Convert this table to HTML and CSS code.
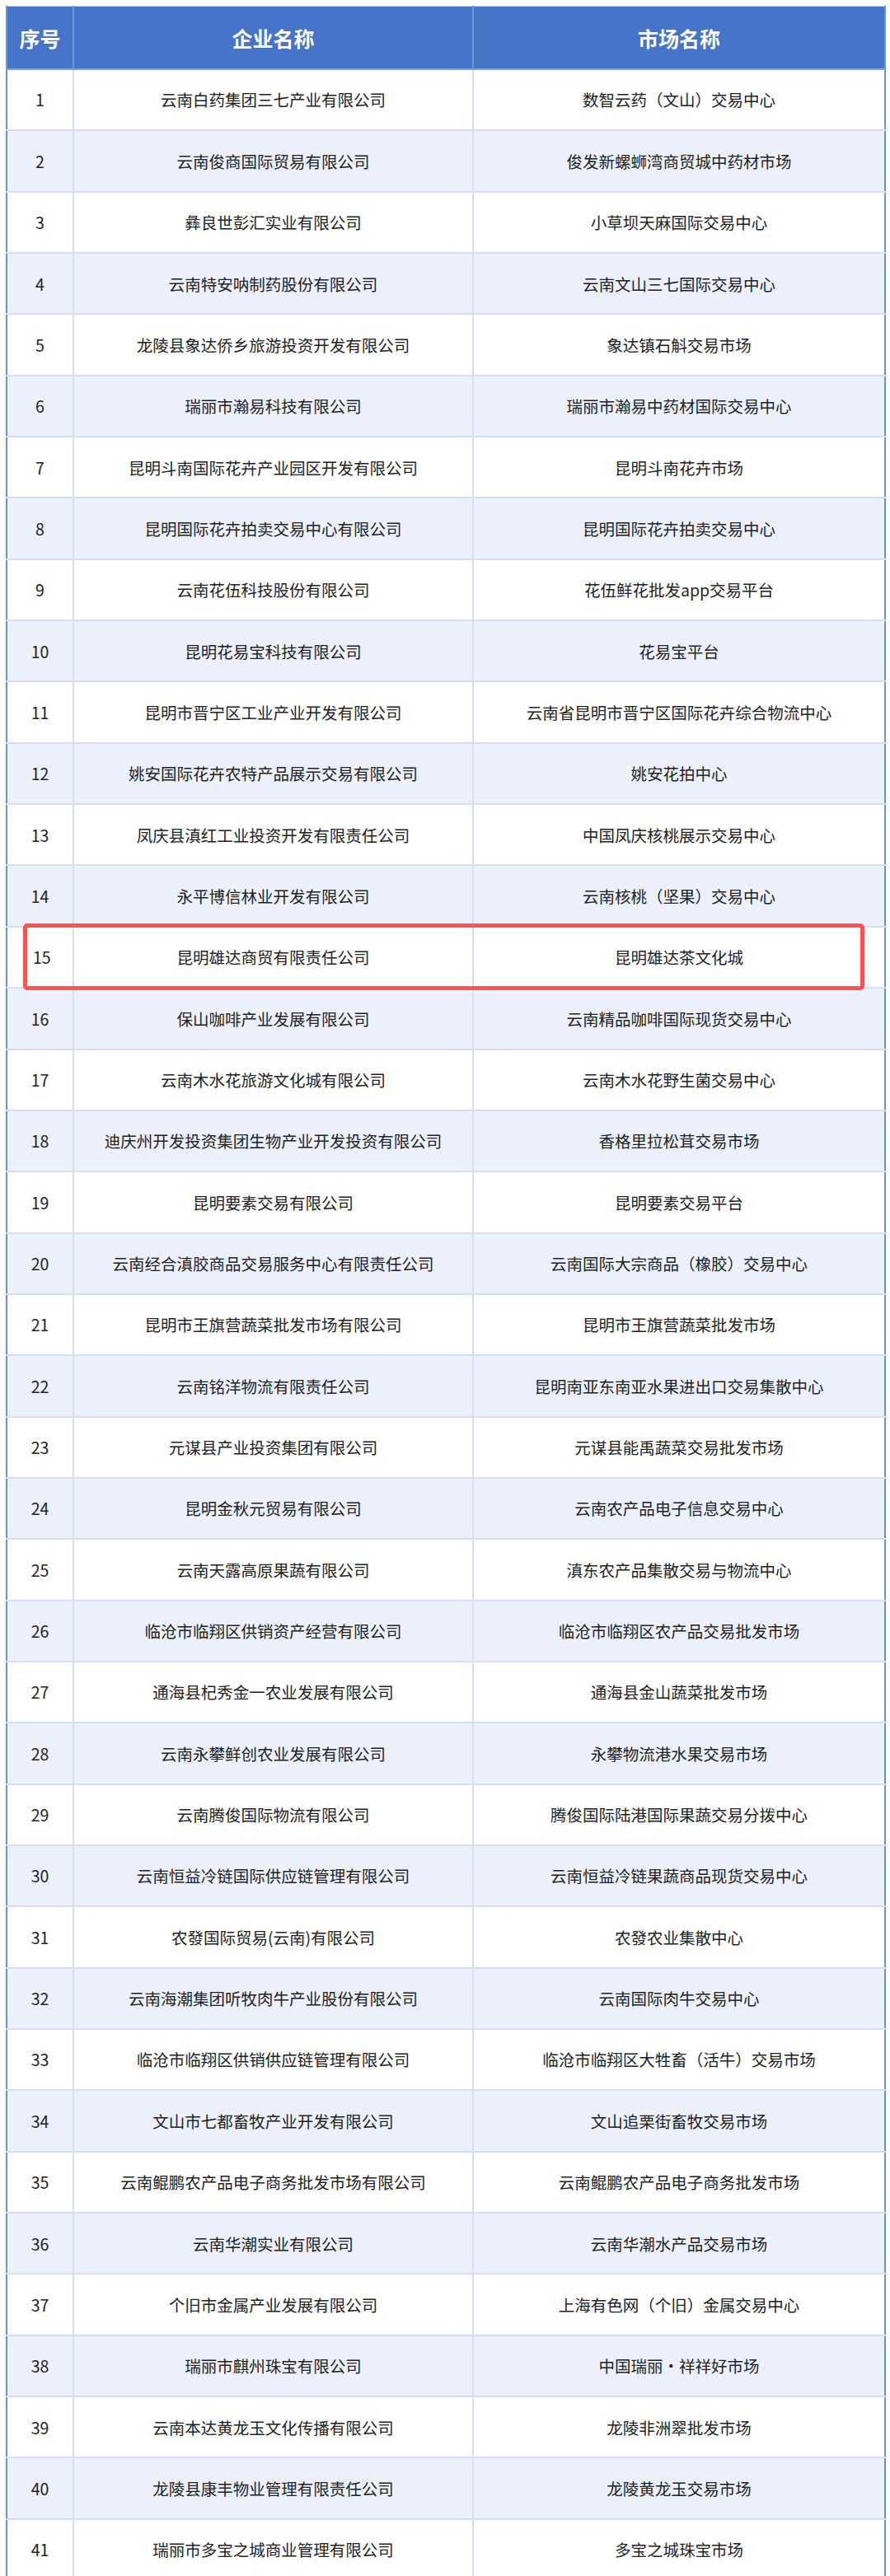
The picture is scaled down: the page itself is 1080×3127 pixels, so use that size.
FILE: index.html
```html
<!DOCTYPE html>
<html lang="zh-CN">
<head>
<meta charset="utf-8">
<title>交易市场名单</title>
<link rel="stylesheet" href="styles.css">
</head>
<body>
<div class="wrap">
<table class="list">
<colgroup><col class="c-no"><col class="c-co"><col class="c-mk"></colgroup>
<thead>
<tr><th>序号</th><th>企业名称</th><th>市场名称</th></tr>
</thead>
<tbody>
<tr><td>1</td><td>云南白药集团三七产业有限公司</td><td>数智云药（文山）交易中心</td></tr>
<tr><td>2</td><td>云南俊商国际贸易有限公司</td><td>俊发新螺蛳湾商贸城中药材市场</td></tr>
<tr><td>3</td><td>彝良世彭汇实业有限公司</td><td>小草坝天麻国际交易中心</td></tr>
<tr><td>4</td><td>云南特安呐制药股份有限公司</td><td>云南文山三七国际交易中心</td></tr>
<tr><td>5</td><td>龙陵县象达侨乡旅游投资开发有限公司</td><td>象达镇石斛交易市场</td></tr>
<tr><td>6</td><td>瑞丽市瀚易科技有限公司</td><td>瑞丽市瀚易中药材国际交易中心</td></tr>
<tr><td>7</td><td>昆明斗南国际花卉产业园区开发有限公司</td><td>昆明斗南花卉市场</td></tr>
<tr><td>8</td><td>昆明国际花卉拍卖交易中心有限公司</td><td>昆明国际花卉拍卖交易中心</td></tr>
<tr><td>9</td><td>云南花伍科技股份有限公司</td><td>花伍鲜花批发app交易平台</td></tr>
<tr><td>10</td><td>昆明花易宝科技有限公司</td><td>花易宝平台</td></tr>
<tr><td>11</td><td>昆明市晋宁区工业产业开发有限公司</td><td>云南省昆明市晋宁区国际花卉综合物流中心</td></tr>
<tr><td>12</td><td>姚安国际花卉农特产品展示交易有限公司</td><td>姚安花拍中心</td></tr>
<tr><td>13</td><td>凤庆县滇红工业投资开发有限责任公司</td><td>中国凤庆核桃展示交易中心</td></tr>
<tr><td>14</td><td>永平博信林业开发有限公司</td><td>云南核桃（坚果）交易中心</td></tr>
<tr class="marked"><td class="no-left"><div class="mark"></div>15</td><td>昆明雄达商贸有限责任公司</td><td>昆明雄达茶文化城</td></tr>
<tr><td>16</td><td>保山咖啡产业发展有限公司</td><td>云南精品咖啡国际现货交易中心</td></tr>
<tr><td>17</td><td>云南木水花旅游文化城有限公司</td><td>云南木水花野生菌交易中心</td></tr>
<tr><td>18</td><td>迪庆州开发投资集团生物产业开发投资有限公司</td><td>香格里拉松茸交易市场</td></tr>
<tr><td>19</td><td>昆明要素交易有限公司</td><td>昆明要素交易平台</td></tr>
<tr><td>20</td><td>云南经合滇胶商品交易服务中心有限责任公司</td><td>云南国际大宗商品（橡胶）交易中心</td></tr>
<tr><td>21</td><td>昆明市王旗营蔬菜批发市场有限公司</td><td>昆明市王旗营蔬菜批发市场</td></tr>
<tr><td>22</td><td>云南铭洋物流有限责任公司</td><td>昆明南亚东南亚水果进出口交易集散中心</td></tr>
<tr><td>23</td><td>元谋县产业投资集团有限公司</td><td>元谋县能禹蔬菜交易批发市场</td></tr>
<tr><td>24</td><td>昆明金秋元贸易有限公司</td><td>云南农产品电子信息交易中心</td></tr>
<tr><td>25</td><td>云南天露高原果蔬有限公司</td><td>滇东农产品集散交易与物流中心</td></tr>
<tr><td>26</td><td>临沧市临翔区供销资产经营有限公司</td><td>临沧市临翔区农产品交易批发市场</td></tr>
<tr><td>27</td><td>通海县杞秀金一农业发展有限公司</td><td>通海县金山蔬菜批发市场</td></tr>
<tr><td>28</td><td>云南永攀鲜创农业发展有限公司</td><td>永攀物流港水果交易市场</td></tr>
<tr><td>29</td><td>云南腾俊国际物流有限公司</td><td>腾俊国际陆港国际果蔬交易分拨中心</td></tr>
<tr><td>30</td><td>云南恒益冷链国际供应链管理有限公司</td><td>云南恒益冷链果蔬商品现货交易中心</td></tr>
<tr><td>31</td><td>农發国际贸易(云南)有限公司</td><td>农發农业集散中心</td></tr>
<tr><td>32</td><td>云南海潮集团听牧肉牛产业股份有限公司</td><td>云南国际肉牛交易中心</td></tr>
<tr><td>33</td><td>临沧市临翔区供销供应链管理有限公司</td><td>临沧市临翔区大牲畜（活牛）交易市场</td></tr>
<tr><td>34</td><td>文山市七都畜牧产业开发有限公司</td><td>文山追栗街畜牧交易市场</td></tr>
<tr><td>35</td><td>云南鲲鹏农产品电子商务批发市场有限公司</td><td>云南鲲鹏农产品电子商务批发市场</td></tr>
<tr><td>36</td><td>云南华潮实业有限公司</td><td>云南华潮水产品交易市场</td></tr>
<tr><td>37</td><td>个旧市金属产业发展有限公司</td><td>上海有色网（个旧）金属交易中心</td></tr>
<tr><td>38</td><td>瑞丽市麒州珠宝有限公司</td><td>中国瑞丽·祥祥好市场</td></tr>
<tr><td>39</td><td>云南本达黄龙玉文化传播有限公司</td><td>龙陵非洲翠批发市场</td></tr>
<tr><td>40</td><td>龙陵县康丰物业管理有限责任公司</td><td>龙陵黄龙玉交易市场</td></tr>
<tr><td>41</td><td>瑞丽市多宝之城商业管理有限公司</td><td>多宝之城珠宝市场</td></tr>
</tbody>
</table>
</div>
</body>
</html>
```
FILE: styles.css
```css
html, body {
  margin: 0;
  padding: 0;
  background: #ffffff;
}
body {
  font-family: "Noto Sans CJK SC", "Noto Sans", sans-serif;
  color: #222222;
}
.wrap {
  padding: 7px 7px 0 7px;
}
.list {
  width: 1066px;
  border-collapse: collapse;
  table-layout: fixed;
  border-left: 2px solid #6a90da;
  border-right: 2px solid #6a90da;
}
.c-no { width: 81px; }
.c-co { width: 485px; }
.c-mk { width: 500px; }
.list th {
  height: 75px;
  background: #4674c9;
  color: #ffffff;
  font-size: 25px;
  font-weight: 700;
  text-align: center;
  vertical-align: middle;
  padding: 0;
  border-top: 1px solid #c8d6f2;
  border-left: 2px solid #7096d8;
  border-bottom: 2px solid #7ea0de;
}
.list th:first-child { border-left: none; }
.list td {
  height: 74.35px;
  box-sizing: border-box;
  padding: 0;
  font-size: 19.5px;
  line-height: 1.2;
  text-align: center;
  vertical-align: middle;
  border-bottom: 2px solid #d4def4;
  border-left: 2px solid #d4def4;
}
.list td:first-child { border-left: none; }
.list tbody tr:nth-child(even) td {
  background: #ebf0fa;
}
.list td.no-left {
  position: relative;
  text-align: left;
  padding-left: 31px;
}
.mark {
  position: absolute;
  left: 19px;
  top: -5px;
  width: 1021px;
  height: 81px;
  box-sizing: border-box;
  border: 5px solid #fc5254;
  border-radius: 5px;
  pointer-events: none;
}
```
